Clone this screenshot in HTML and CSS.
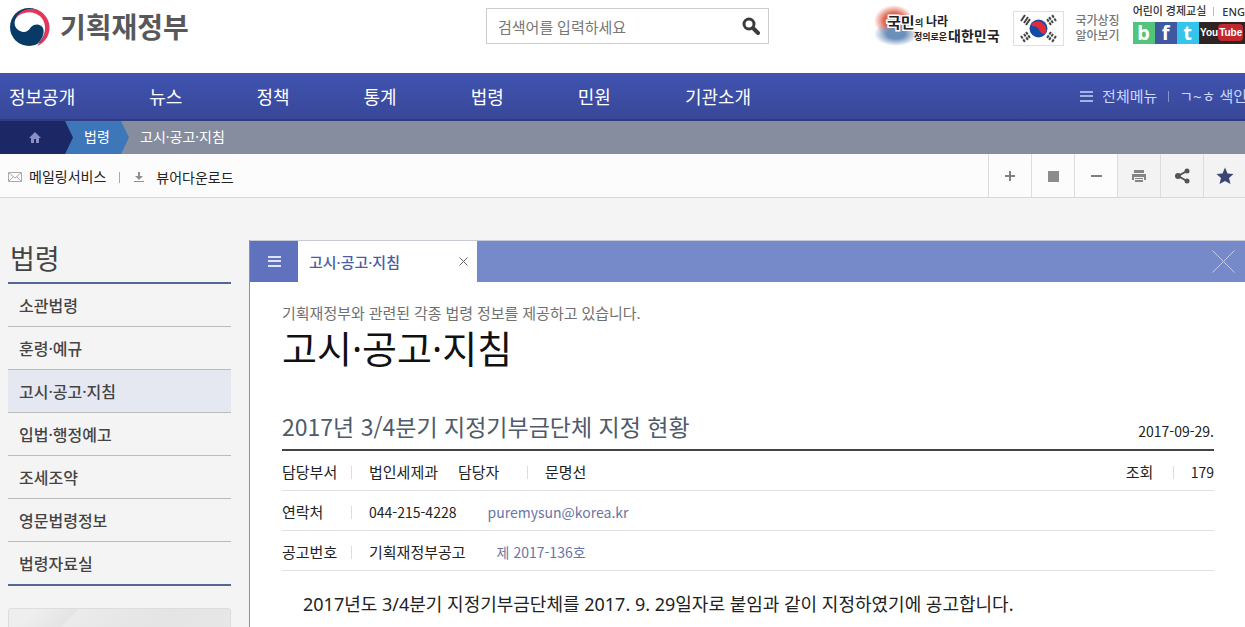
FILE: index.html
```html
<!DOCTYPE html>
<html lang="ko">
<head>
    <meta charset="UTF-8">
    <meta name="viewport" content="width=device-width, initial-scale=1.0">
    <title>고시·공고·지침 - 기획재정부</title>
    <link rel="stylesheet" href="styles.css">
</head>
<body>
    <header class="header">
        <a href="#" class="logo">
            <svg width="42" height="40" viewBox="0 0 42 40">
                <circle cx="21" cy="20" r="19" fill="#073a66"/>
                <path d="M8 10C13 2 23 0 30 3A19.500 19.500 0 0 1 29 39C40 28 38 15 31 9Z" fill="#e4355a"/>
                <path d="M8 11C14 4 26 3 33 10C40 18 38 31 27 39C34 33 37 27 35 21C33 17 27 16 23 20C20 25 16 26 12 24C7 22 5 16 8 11Z" fill="#fff"/>
            </svg>
            <span>기획재정부</span>
        </a>
        <form class="search">
            <input type="text" placeholder="검색어를 입력하세요" aria-label="검색어">
            <button type="button" aria-label="검색">
                <svg width="18" height="18" viewBox="0 0 18 18" fill="none" stroke="#3c3c3c">
                    <circle cx="7" cy="7" r="5" stroke-width="3"/>
                    <path d="M11 11L16 16" stroke-width="4" stroke-linecap="round"/>
                </svg>
            </button>
        </form>
        <div class="header-right">
            <a href="#" class="slogan" aria-label="국민의 나라 정의로운 대한민국">
                <svg width="130" height="44" viewBox="0 0 130 44">
                    <defs>
                        <radialGradient id="red"><stop offset="0.5" stop-color="#df6651"/><stop offset="1" stop-color="#df6651" stop-opacity="0"/></radialGradient>
                        <radialGradient id="blue"><stop offset="0.4" stop-color="#6c8fbb"/><stop offset="1" stop-color="#6c8fbb" stop-opacity="0"/></radialGradient>
                    </defs>
                    <ellipse cx="23" cy="17" rx="20" ry="16" fill="url(#red)"/>
                    <ellipse cx="25" cy="30" rx="22" ry="12" fill="url(#blue)"/>
                    <g class="brush" fill="#222">
                        <text x="16" y="24" font-size="15" stroke="#fff" stroke-width="3" paint-order="stroke">국민</text>
                        <text x="44" y="22" font-size="9">의</text>
                        <text x="55" y="22" font-size="12">나라</text>
                        <text x="43" y="36" font-size="9">정의로운</text>
                        <text x="77" y="37" font-size="14">대한민국</text>
                    </g>
                </svg>
            </a>
            <a href="#" class="flag" aria-label="태극기">
                <svg width="49" height="33" viewBox="0 0 49 33">
                    <circle cx="24.500" cy="16.500" r="9" fill="#164ba3"/>
                    <path d="M17 12A9 9 0 0 1 32 21C29 24 26 20 24.500 16.500C22 13 18 16 17 12Z" fill="#df2b3c"/>
                    <g stroke="#444" stroke-width="2">
                        <path d="M7 9L11 3M10 11L14 5M12 13L16 7"/>
                        <path d="M42 9L38 3M39 11L35 5M37 13L33 7" stroke-dasharray="3 1"/>
                        <path d="M7 24L11 30M10 22L14 28M12 20L16 26" stroke-dasharray="3 1"/>
                        <path d="M42 24L38 30M39 22L35 28M37 20L33 26" stroke-dasharray="3 1"/>
                    </g>
                </svg>
            </a>
            <a href="#" class="symbol">국가상징<br>알아보기</a>
            <div class="family">
                <div class="family-links">
                    <a href="#">어린이 경제교실</a>
                    <a href="#" class="eng">ENG</a>
                </div>
                <div class="sns">
                    <a href="#" class="blog">b</a>
                    <a href="#" class="facebook">f</a>
                    <a href="#" class="twitter">t</a>
                    <a href="#" class="youtube">You<span>Tube</span></a>
                </div>
            </div>
        </div>
    </header>

    <nav class="gnb">
        <ul class="gnb-menu">
            <li><a href="#">정보공개</a></li>
            <li><a href="#">뉴스</a></li>
            <li><a href="#">정책</a></li>
            <li><a href="#">통계</a></li>
            <li><a href="#">법령</a></li>
            <li><a href="#">민원</a></li>
            <li><a href="#">기관소개</a></li>
        </ul>
        <div class="gnb-util">
            <a href="#" class="all-menu">
                <svg width="13" height="11" viewBox="0 0 13 11" fill="#a3b2e8"><path d="M0 0h13v2H0zM0 4h13v2H0zM0 9h13v2H0z"/></svg>
                전체메뉴
            </a>
            <a href="#" class="index-link">ㄱ~ㅎ 색인</a>
        </div>
    </nav>

    <nav class="breadcrumb">
        <a href="#" class="crumb-home" aria-label="홈">
            <svg width="12" height="11" viewBox="0 0 12 11" fill="#8990c9"><path d="M6 0L12 6H10V11H7V7H5V11H2V6H0Z"/></svg>
        </a>
        <a href="#" class="crumb-parent">법령</a>
        <a href="#" class="crumb-current">고시·공고·지침</a>
    </nav>

    <div class="toolbar">
        <div class="service">
            <a href="#">
                <svg width="14" height="10" viewBox="0 0 14 10" fill="none" stroke="#aaa"><path d="M0.500 0.500h13v9H0.500zM1 1l6 5 6-5M1 9l4-4M13 9L9 5"/></svg>
                메일링서비스
            </a>
            <a href="#" class="viewer">
                <svg width="10" height="11" viewBox="0 0 10 11" fill="#8f8f8f"><path d="M4 0h2v4h3L5 8 1 4h3zM0 9h10v1H0z"/></svg>
                뷰어다운로드
            </a>
        </div>
        <div class="tools">
            <button type="button" aria-label="확대"><svg width="12" height="12" viewBox="0 0 12 12"><path d="M5 1h2v4h4v2H7v4H5V7H1V5h4z" fill="#808080"/></svg></button>
            <button type="button" aria-label="기본 크기"><svg width="12" height="12" viewBox="0 0 12 12"><path d="M1 1h11v11H1z" fill="#8c8c8c"/></svg></button>
            <button type="button" aria-label="축소"><svg width="12" height="12" viewBox="0 0 12 12"><path d="M1 5h11v2H1z" fill="#808080"/></svg></button>
            <button type="button" class="shade" aria-label="인쇄"><svg width="16" height="14" viewBox="0 0 16 14" fill="#858585"><path d="M3 1h10v3H3zM1 5h14v6h-2V8H3v3H1zM4 9h8v1H4zM4 11h8v2H4z"/></svg></button>
            <button type="button" class="shade" aria-label="공유"><svg width="16" height="16" viewBox="0 0 16 16" fill="#555"><circle cx="4" cy="8" r="3"/><circle cx="13" cy="3" r="2.500"/><circle cx="13" cy="13" r="2.500"/><path d="M13 3L4 8L13 13" fill="none" stroke="#555" stroke-width="2"/></svg></button>
            <button type="button" class="shade" aria-label="즐겨찾기"><svg width="18" height="18" viewBox="0 0 18 18" fill="#3b4674"><path d="M9 0.500L11.500 6.500L17.500 7L13 11L14.500 17L9 14L3.500 17L5 11L0.500 7L6.500 6.500Z"/></svg></button>
        </div>
    </div>

    <div class="container">
        <aside class="sidebar">
            <h2>법령</h2>
            <ul>
                <li><a href="#">소관법령</a></li>
                <li><a href="#">훈령·예규</a></li>
                <li><a href="#" class="active">고시·공고·지침</a></li>
                <li><a href="#">입법·행정예고</a></li>
                <li><a href="#">조세조약</a></li>
                <li><a href="#">영문법령정보</a></li>
                <li><a href="#">법령자료실</a></li>
            </ul>
            <div class="banner"></div>
        </aside>

        <main class="content">
            <div class="tabs">
                <button type="button" class="tab-menu" aria-label="메뉴">
                    <svg width="13" height="11" viewBox="0 0 13 11" fill="#dfe3f5"><path d="M0 0h13v2H0zM0 4h13v2H0zM0 9h13v2H0z"/></svg>
                </button>
                <div class="tab">
                    <a href="#">고시·공고·지침</a>
                    <button type="button" aria-label="탭 닫기">
                        <svg width="9" height="9" viewBox="0 0 9 9" stroke="#666"><path d="M0.500 0.500l8 8M8.500 0.500l-8 8"/></svg>
                    </button>
                </div>
                <button type="button" class="close-all" aria-label="모두 닫기">
                    <svg width="23" height="23" viewBox="0 0 23 23" stroke="#c3ccef"><path d="M0.500 0.500l22 22M22.500 0.500l-22 22"/></svg>
                </button>
            </div>

            <div class="article">
                <p class="desc">기획재정부와 관련된 각종 법령 정보를 제공하고 있습니다.</p>
                <h1>고시·공고·지침</h1>

                <div class="article-title">
                    <h2>2017년 3/4분기 지정기부금단체 지정 현황</h2>
                    <span class="date">2017-09-29.</span>
                </div>
                <dl class="info">
                    <dt>담당부서</dt>
                    <dd>법인세제과</dd>
                    <dt class="next">담당자</dt>
                    <dd>문명선</dd>
                    <dt class="views">조회</dt>
                    <dd class="num">179</dd>
                </dl>
                <dl class="info">
                    <dt>연락처</dt>
                    <dd class="num">044-215-4228</dd>
                    <dd class="num extra"><a href="#">puremysun@korea.kr</a></dd>
                </dl>
                <dl class="info">
                    <dt>공고번호</dt>
                    <dd>기획재정부공고</dd>
                    <dd class="num extra"><a href="#">제 2017-136호</a></dd>
                </dl>
                <p class="text">2017년도 3/4분기 지정기부금단체를 2017. 9. 29일자로 붙임과 같이 지정하였기에 공고합니다.</p>
            </div>
        </main>
    </div>
</body>
</html>
```
FILE: styles.css
```css
* {
    box-sizing: border-box;
}

body {
    margin: 0;
    background: #f4f4f4;
    color: #222;
    font-family: "Noto Sans", "Noto Sans CJK KR", sans-serif;
    font-size: 15px;
    line-height: 20px;
    overflow-x: hidden;
}

h1, h2, p, ul, dl, dd {
    margin: 0;
    padding: 0;
    font-weight: 400;
}

ul {
    list-style: none;
}

a {
    color: inherit;
    text-decoration: none;
    white-space: nowrap;
}

button {
    display: flex;
    align-items: center;
    justify-content: center;
    padding: 0;
    border: 0;
    background: none;
    cursor: pointer;
}

svg {
    flex: none;
}

/* header */
.header {
    display: flex;
    align-items: flex-start;
    height: 73px;
    background: #fff;
}

.logo {
    display: flex;
    align-items: center;
    gap: 10px;
    flex: 0 0 486px;
    padding: 7px 0 0 8px;
    color: #58585a;
    font-size: 28px;
    font-weight: 700;
    line-height: 40px;
}

.search {
    display: flex;
    flex: 0 0 283px;
    height: 36px;
    margin-top: 8px;
    border: 1px solid #ccc;
}

.search input {
    flex: 1;
    min-width: 0;
    padding: 2px 0 0 11px;
    border: 0;
    outline: 0;
    background: none;
    font: inherit;
}

.search input::placeholder {
    color: #777;
    opacity: 1;
}

.search button {
    width: 34px;
}

.header-right {
    display: flex;
    flex: 0 0 373px;
    margin-left: auto;
}

.slogan {
    width: 140px;
    padding-top: 4px;
}

.brush {
    font-family: "Noto Sans CJK KR", sans-serif;
    font-weight: 700;
}

.flag {
    height: 35px;
    margin: 11px 0 0 2px;
    border: 1px solid #e0e0e0;
}

.symbol {
    margin: 13px 0 0 11px;
    color: #777;
    font-size: 12px;
    font-weight: 500;
    line-height: 15px;
}

.family {
    margin-left: 13px;
}

.family-links {
    display: flex;
    align-items: center;
    height: 22px;
    color: #333;
    font-size: 11px;
    font-weight: 500;
}

.eng {
    margin-left: 7px;
    padding-left: 8px;
    border-left: 1px solid #bbb;
    line-height: 9px;
}

.sns {
    display: flex;
    height: 22px;
    color: #fff;
    font-size: 20px;
    font-weight: 700;
    line-height: 22px;
    text-align: center;
}

.sns a {
    width: 22px;
}

.sns .blog {
    background: #53c57b;
}

.sns .facebook {
    background: #40589f;
}

.sns .twitter {
    background: #35c4ec;
}

.sns .youtube {
    width: 46px;
    background: #2c2524;
    font-family: "Liberation Sans Narrow", "Liberation Sans", sans-serif;
    font-size: 10px;
}

.youtube span {
    padding: 3px 1px;
    border-radius: 4px;
    background: #c1272d;
}

/* main menu */
.gnb {
    display: flex;
    justify-content: space-between;
    align-items: center;
    height: 48px;
    border-bottom: 2px solid #303b80;
    background: linear-gradient(#4054b0, #384798);
    color: #fff;
}

.gnb-menu {
    display: flex;
    gap: 74px;
    padding: 2px 0 0 9px;
    font-size: 18px;
}

.gnb-util {
    display: flex;
    align-items: center;
    flex: 0 0 164px;
    margin-right: -2px;
    color: #ccd6ff;
}

.all-menu {
    display: flex;
    align-items: center;
    gap: 9px;
}

.index-link {
    margin-left: 11px;
    padding-left: 10px;
    border-left: 1px solid #8593d2;
    line-height: 11px;
}

/* breadcrumb */
.breadcrumb {
    display: flex;
    height: 33px;
    background: #858d9f;
    color: #fff;
    font-size: 14px;
    line-height: 32px;
}

.crumb-home,
.crumb-parent {
    clip-path: polygon(0 0, calc(100% - 8px) 0, 100% 50%, calc(100% - 8px) 100%, 0 100%);
}

.crumb-home {
    display: flex;
    align-items: center;
    z-index: 1;
    width: 73px;
    padding-left: 29px;
    background: #1c2765;
}

.crumb-parent {
    width: 64px;
    margin-left: -8px;
    padding-left: 19px;
    background: #3e77b9;
}

.crumb-current {
    padding-left: 11px;
}

/* toolbar */
.toolbar {
    display: flex;
    justify-content: space-between;
    height: 44px;
    border-bottom: 1px solid #d8d8d8;
    background: #fcfcfc;
}

.service {
    display: flex;
    align-items: center;
    padding: 3px 0 0 8px;
    font-size: 14px;
}

.service a {
    display: flex;
    align-items: center;
    gap: 7px;
}

.service .viewer {
    gap: 12px;
    margin-left: 13px;
    padding-left: 14px;
    border-left: 1px solid #aaa;
    line-height: 11px;
}

.tools {
    display: flex;
}

.tools button {
    width: 43px;
    border-left: 1px solid #ddd;
}

.tools button:last-child {
    width: 42px;
}

.tools .shade {
    background: #f3f3f3;
}

/* layout */
.container {
    display: flex;
    align-items: flex-start;
    padding: 42px 0 0 8px;
}

.sidebar {
    flex: 0 0 223px;
    margin-right: 18px;
    color: #444;
}

.sidebar h2 {
    height: 44px;
    padding-left: 2px;
    border-bottom: 2px solid #566796;
    font-size: 27px;
    line-height: 38px;
}

.sidebar ul {
    border-bottom: 2px solid #566796;
}

.sidebar li + li {
    border-top: 1px solid #bbb;
}

.sidebar li a {
    display: block;
    padding: 12px 11px 10px;
    font-size: 16px;
    font-weight: 500;
}

.sidebar .active {
    background: #e5e8f1;
}

.banner {
    height: 60px;
    margin-top: 22px;
    border: 1px solid #ddd;
    border-radius: 3px;
    background: linear-gradient(135deg, #eee 10%, #e4e4e4 25%, #ebebeb 25%, #e4e4e4 60%, #e9e9e9);
}

.content {
    flex: 1;
    min-width: 0;
    border-left: 1px solid #8b92a2;
    background: #fff;
}

.tabs {
    display: flex;
    height: 42px;
    border-top: 1px solid #c5c9d8;
    background: #768ac9;
}

.tab-menu {
    width: 48px;
    background: #6072bd;
}

.tab {
    display: flex;
    align-items: center;
    justify-content: space-between;
    width: 179px;
    padding: 0 9px 0 11px;
    background: #fff;
    color: #4b5ca4;
    font-weight: 500;
}

.close-all {
    width: 43px;
    margin-left: auto;
}

.article {
    padding: 21px 31px 30px 32px;
}

.desc {
    color: #707070;
}

h1 {
    color: #111;
    font-size: 38px;
    line-height: 50px;
}

.article-title {
    display: flex;
    align-items: flex-end;
    justify-content: space-between;
    margin-top: 38px;
    padding-bottom: 8px;
    border-bottom: 2px solid #444;
}

.article-title h2 {
    color: #505a6a;
    font-family: "Noto Sans CJK KR", sans-serif;
    font-size: 23px;
    line-height: 30px;
}

.date,
.num {
    font-family: "Noto Sans CJK KR", sans-serif;
    font-size: 14px;
}

.info {
    display: flex;
    align-items: center;
    height: 40px;
    padding-top: 3px;
    border-bottom: 1px solid #e0e0e0;
}

.info dt {
    width: 70px;
    border-right: 1px solid #ddd;
    line-height: 13px;
}

.info dd {
    padding-left: 17px;
}

.info .next {
    margin-left: 20px;
}

.info .views {
    width: 48px;
    margin-left: auto;
}

.info .extra {
    padding-left: 31px;
    color: #6a75a5;
}

.text {
    margin-top: 20px;
    padding-left: 21px;
    font-size: 18px;
    line-height: 26px;
}
```
